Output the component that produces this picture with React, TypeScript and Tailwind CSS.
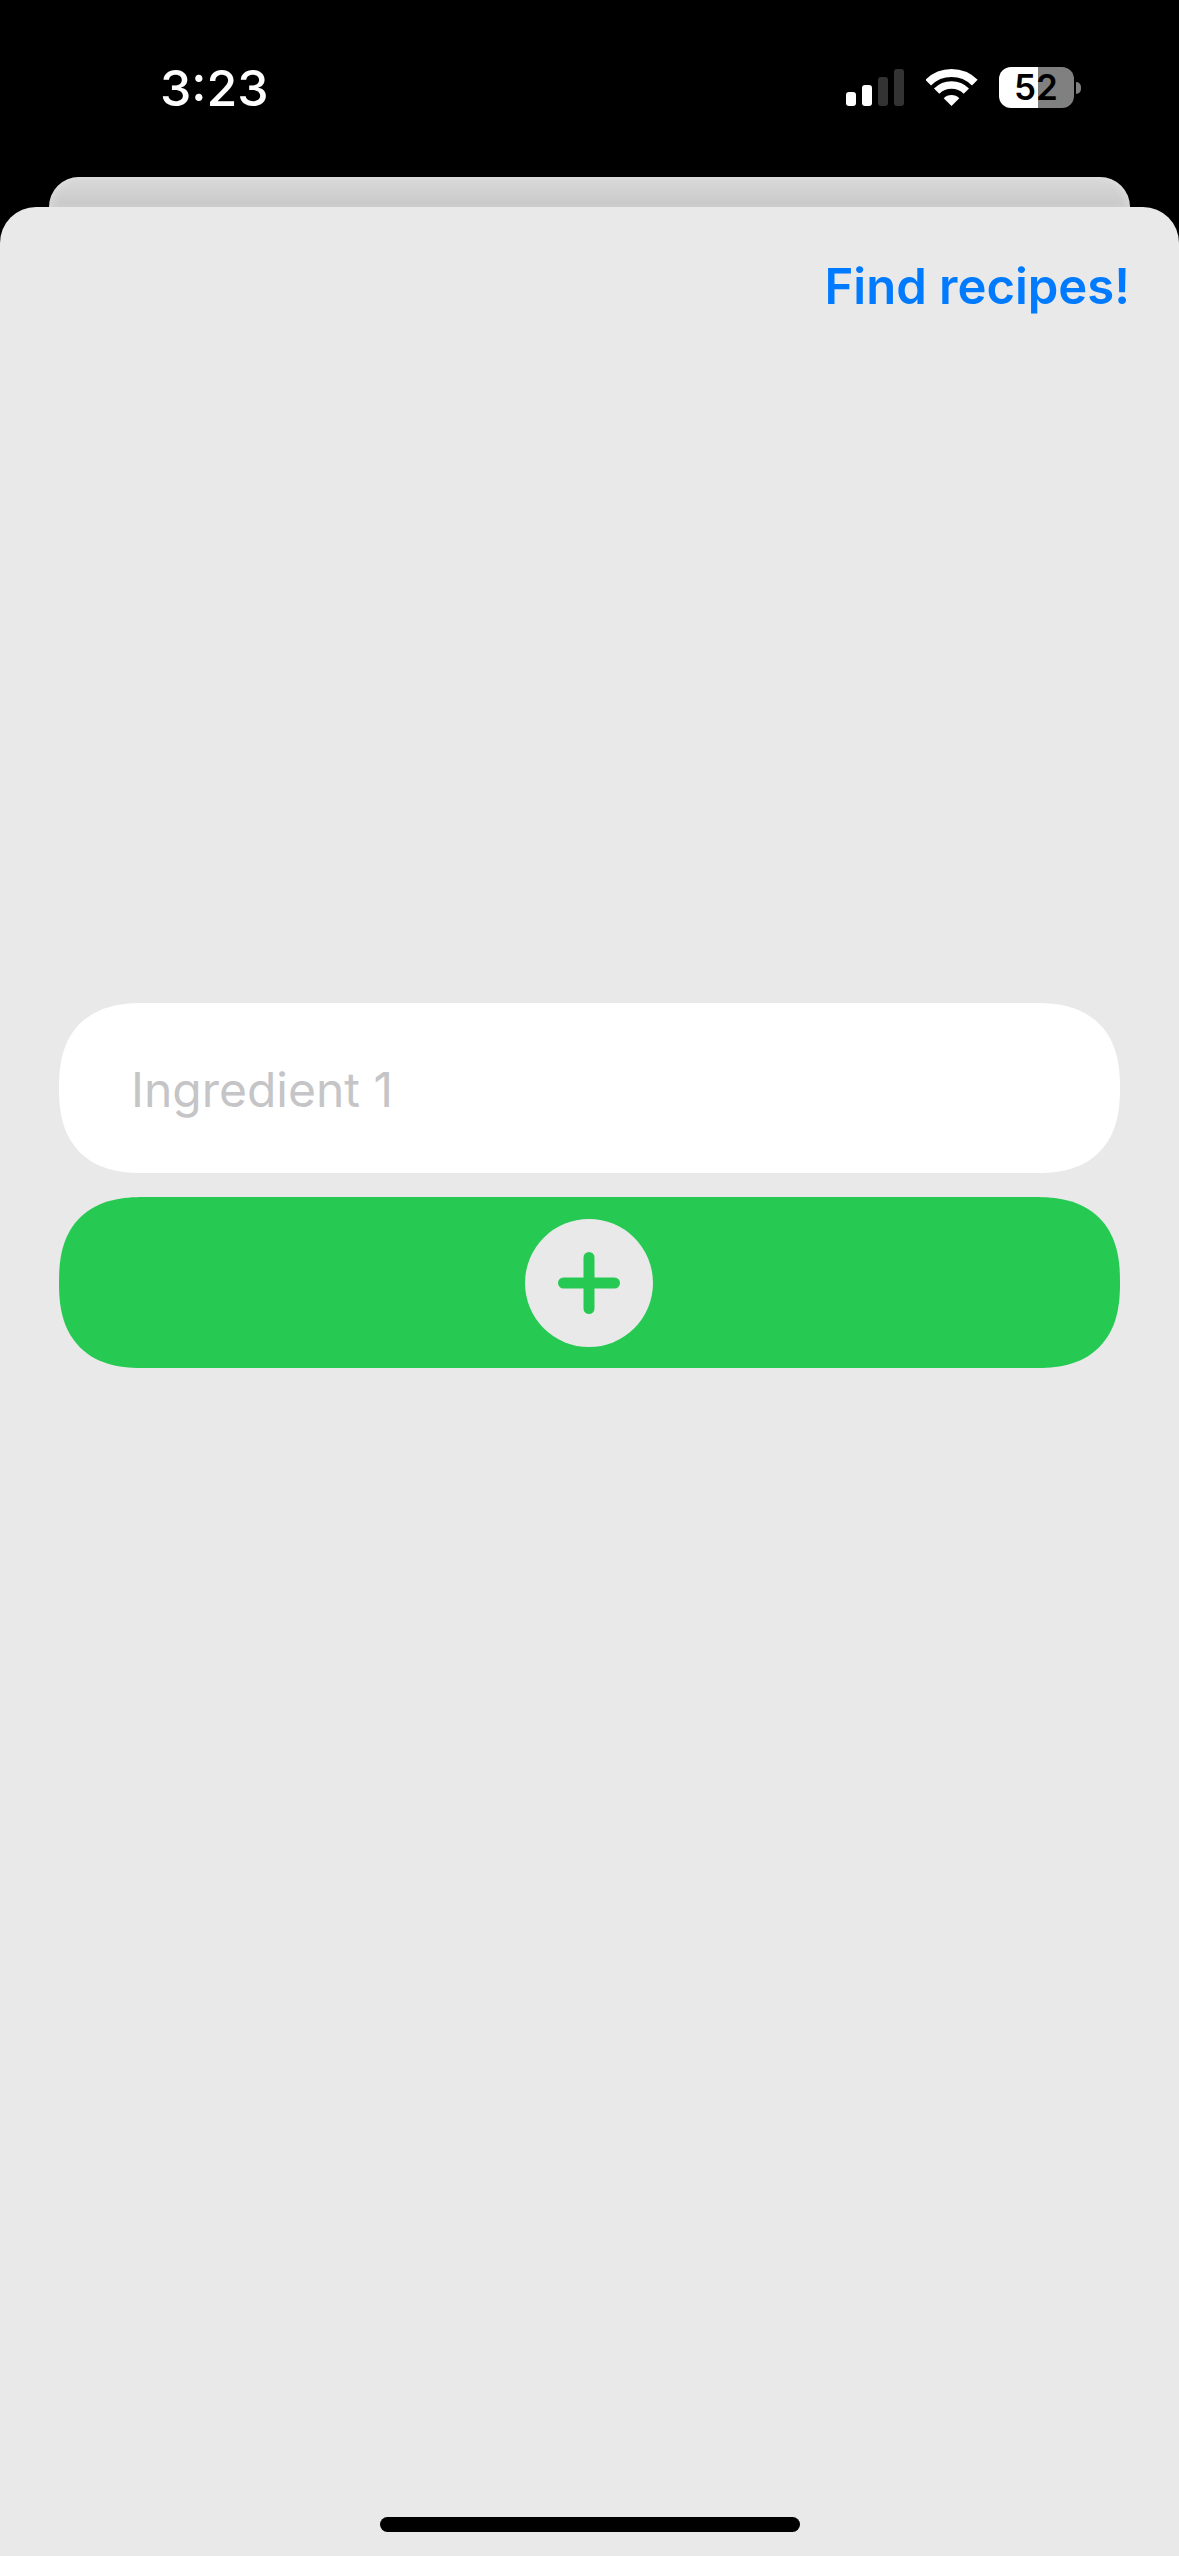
const font = "font-['Inter','Liberation_Sans',sans-serif]";

function StatusIcons() {
  return (
    <div className="flex items-center">
      <div className="flex items-end gap-[6px]">
        <div className="h-[14px] w-[10px] rounded-[3px] bg-white" />
        <div className="h-[21px] w-[10px] rounded-[3px] bg-white" />
        <div className="h-[29px] w-[10px] rounded-[3px] bg-[#333333]" />
        <div className="h-[37px] w-[10px] rounded-[3px] bg-[#333333]" />
      </div>
      <svg width="52" height="38" viewBox="0 0 52 38" fill="none" className="ml-[22px]">
        <path d="M2.2 13.7A33 33 0 0 1 48.8 13.7" stroke="#fff" strokeWidth="8" />
        <path d="M10.65 22.15A21 21 0 0 1 40.35 22.15" stroke="#fff" strokeWidth="7.5" />
        <path d="M25.5 37L17.7 29.2A11 11 0 0 1 33.3 29.2Z" fill="#fff" />
      </svg>
      <div className="ml-[21px] flex items-center gap-[2px]">
        <div className="flex h-[41px] w-[75px] items-center justify-center rounded-[12px] bg-[linear-gradient(to_right,#ffffff_52%,#808080_52%)] pr-[1px] text-[35px] leading-none font-semibold text-black">
          52
        </div>
        <div className="h-[12px] w-[5px] rounded-r-full bg-[#808080]" />
      </div>
    </div>
  );
}

export default function App() {
  return (
    <div className={`flex h-[2556px] flex-col overflow-hidden bg-black ${font}`}>
      <div className="flex h-[177px] items-start justify-between pt-[58px] pr-[98px] pl-[160px]">
        <span className="text-[50px] leading-[60px] font-medium text-white">3:23</span>
        <div className="pt-[9px]">
          <StatusIcons />
        </div>
      </div>

      <div className="mx-[49px] h-[30px] shrink-0 rounded-t-[32px] bg-gradient-to-b from-[#dadada] to-[#c8c8c8] shadow-[inset_8px_0_10px_-4px_rgba(255,255,255,0.25),inset_-8px_0_10px_-4px_rgba(255,255,255,0.25)]" />

      <div className="flex flex-1 flex-col rounded-t-[36px] bg-[#e9e9e9]">
        <div className="flex justify-end pt-[50px] pr-[49px]">
          <button className="text-[49px] leading-[60px] font-semibold text-[#007aff]">Find recipes!</button>
        </div>

        <div className="mt-[686px] flex flex-col gap-[24px] px-[59px]">
          <div className="flex h-[170px] items-center rounded-[85px] bg-white px-[72px] [corner-shape:superellipse(1.3)]">
            <span className="pt-[3px] text-[48px] leading-[60px] text-[#c5c5c7]">Ingredient 1</span>
          </div>
          <button className="flex h-[171px] items-center justify-center rounded-[85px] bg-[#26ca52] pr-[2px] [corner-shape:superellipse(1.3)]">
            <span className="flex h-[128px] w-[128px] items-center justify-center rounded-full bg-[#e9e9e9]">
              <svg width="62" height="62" viewBox="0 0 62 62" fill="none" stroke="#26ca52" strokeWidth="11" strokeLinecap="round">
                <path d="M5.5 31H56.5M31 5.5V56.5" />
              </svg>
            </span>
          </button>
        </div>

        <div className="mt-auto mb-[24px] h-[15px] w-[420px] self-center rounded-full bg-black" />
      </div>
    </div>
  );
}
